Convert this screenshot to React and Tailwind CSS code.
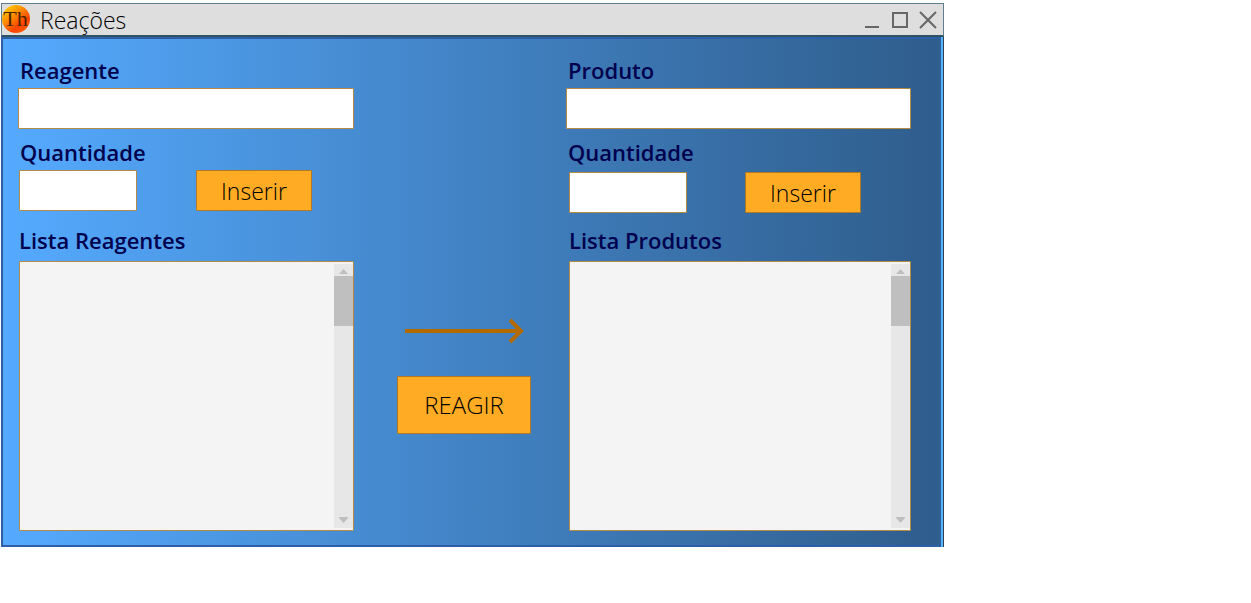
import React from "react";

const box = "block h-[41px] rounded-[1px] border border-[#b58a45] bg-white px-2 font-['Open_Sans',sans-serif] text-xl outline-none";
const label = "block text-[22px] leading-8 font-semibold text-[#00004d]";
const action = "rounded-[1px] border border-[#b07a24] bg-[#ffab24] leading-8 font-light text-black";

function Logo() {
  return (
    <svg viewBox="0 0 30 30" className="h-[30px] w-[30px] shrink-0" aria-hidden="true">
      <defs>
        <linearGradient id="logo-fill" x1="0.1" y1="0.05" x2="0.8" y2="0.95">
          <stop offset="0" stopColor="#ffd000" />
          <stop offset="0.35" stopColor="#ff9500" />
          <stop offset="0.75" stopColor="#ff4300" />
          <stop offset="1" stopColor="#ff5a00" />
        </linearGradient>
      </defs>
      <circle cx="14" cy="14" r="14" fill="url(#logo-fill)" />
      <text x="13.5" y="21" textAnchor="middle" fontFamily="Liberation Serif, serif" fontSize="22" fill="#4a2600">
        Th
      </text>
    </svg>
  );
}

function TitleBar() {
  return (
    <header className="flex h-[34px] items-center border border-b-2 border-[#5f7f8f] border-b-[#2f5363] bg-[#dedede]">
      <Logo />
      <h1 className="ml-2 flex-1 text-[23px] leading-8 font-light text-black">Reações</h1>
      <div className="flex gap-2 pr-[5px]">
        <button type="button" aria-label="Minimizar" className="h-5 w-5">
          <svg viewBox="0 0 20 20" className="h-5 w-5" fill="none" stroke="#666" strokeWidth="2">
            <path d="M3 17H17" />
          </svg>
        </button>
        <button type="button" aria-label="Maximizar" className="h-5 w-5">
          <svg viewBox="0 0 20 20" className="h-5 w-5" fill="none" stroke="#666" strokeWidth="2">
            <path d="M3 3H17V17H3Z" />
          </svg>
        </button>
        <button type="button" aria-label="Fechar" className="h-5 w-5">
          <svg viewBox="0 0 20 20" className="h-5 w-5" fill="none" stroke="#666" strokeWidth="2">
            <path d="M2 2L18 18M18 2L2 18" />
          </svg>
        </button>
      </div>
    </header>
  );
}

function ListBox({ labelledBy }) {
  return (
    <div
      role="listbox"
      aria-labelledby={labelledBy}
      className="flex h-[270px] justify-end rounded-[1px] border border-[#b58a45] bg-[#f4f4f4] py-0.5"
    >
      <div className="flex w-[19px] flex-col bg-[#e7e7e7]" aria-hidden="true">
        <svg viewBox="0 0 19 12" className="h-3 w-full shrink-0" fill="#bfbfbf">
          <path d="M5 10L9.500 5L14 10Z" />
        </svg>
        <div className="h-[50px] bg-[#bfbfbf]" />
        <svg viewBox="0 0 19 12" className="mt-auto h-3 w-full shrink-0" fill="#bfbfbf">
          <path d="M5 1H14V2L9.500 7L5 2Z" />
        </svg>
      </div>
    </div>
  );
}

function Column({ id, name, listName, className, lower, list }) {
  return (
    <section className={className}>
      <label htmlFor={id} className={label + " mb-0.5 px-0.5"}>{name}</label>
      <input id={id} type="text" className={box + " w-full"} />
      <label htmlFor={id + "-qtd"} className={label + " mt-[7px] mb-0.5 px-0.5"}>Quantidade</label>
      <div className={lower}>
        <input id={id + "-qtd"} type="text" className={box + " w-[118px]"} />
        <button type="button" className={action + " h-[41px] w-[116px] text-[23px]"}>Inserir</button>
      </div>
      <div className={list}>
        <h2 id={id + "-lista"} className={label + " mb-[5px]"}>{listName}</h2>
        <ListBox labelledBy={id + "-lista"} />
      </div>
    </section>
  );
}

export default function App() {
  return (
    <div className="pt-[3px] pl-px font-['Open_Sans',sans-serif]">
      <div className="w-full max-w-[943px]">
        <TitleBar />
        <div className="border-r border-[#333f50] bg-[#55b5ff] pr-0.5">
          <main className="flex justify-between border-2 border-r-1 border-[#2d5fa8] bg-linear-to-r from-[#55aaff] to-[#2f5d8c] pt-[15px] pr-[29px] pb-3.5 pl-[15px]">
            <Column
              id="reagente"
              name="Reagente"
              listName="Lista Reagentes"
              className="w-[336px]"
              lower="flex gap-[59px] pl-px"
              list="mt-[13px] pl-px"
            />
            <div className="flex flex-col items-center pt-[263px] pl-2">
              <svg viewBox="0 0 120 28" className="h-7 w-[120px]" fill="none" stroke="#b36b00" strokeWidth="4" aria-hidden="true">
                <path d="M1 14H117M106 3L117 14L106 25" />
              </svg>
              <button type="button" className={action + " mt-[31px] h-[58px] w-[134px] text-2xl"}>REAGIR</button>
            </div>
            <Column
              id="produto"
              name="Produto"
              listName="Lista Produtos"
              className="w-[345px]"
              lower="flex gap-[58px] pt-0.5 pl-[3px]"
              list="mt-[11px] pl-[3px]"
            />
          </main>
        </div>
      </div>
    </div>
  );
}
